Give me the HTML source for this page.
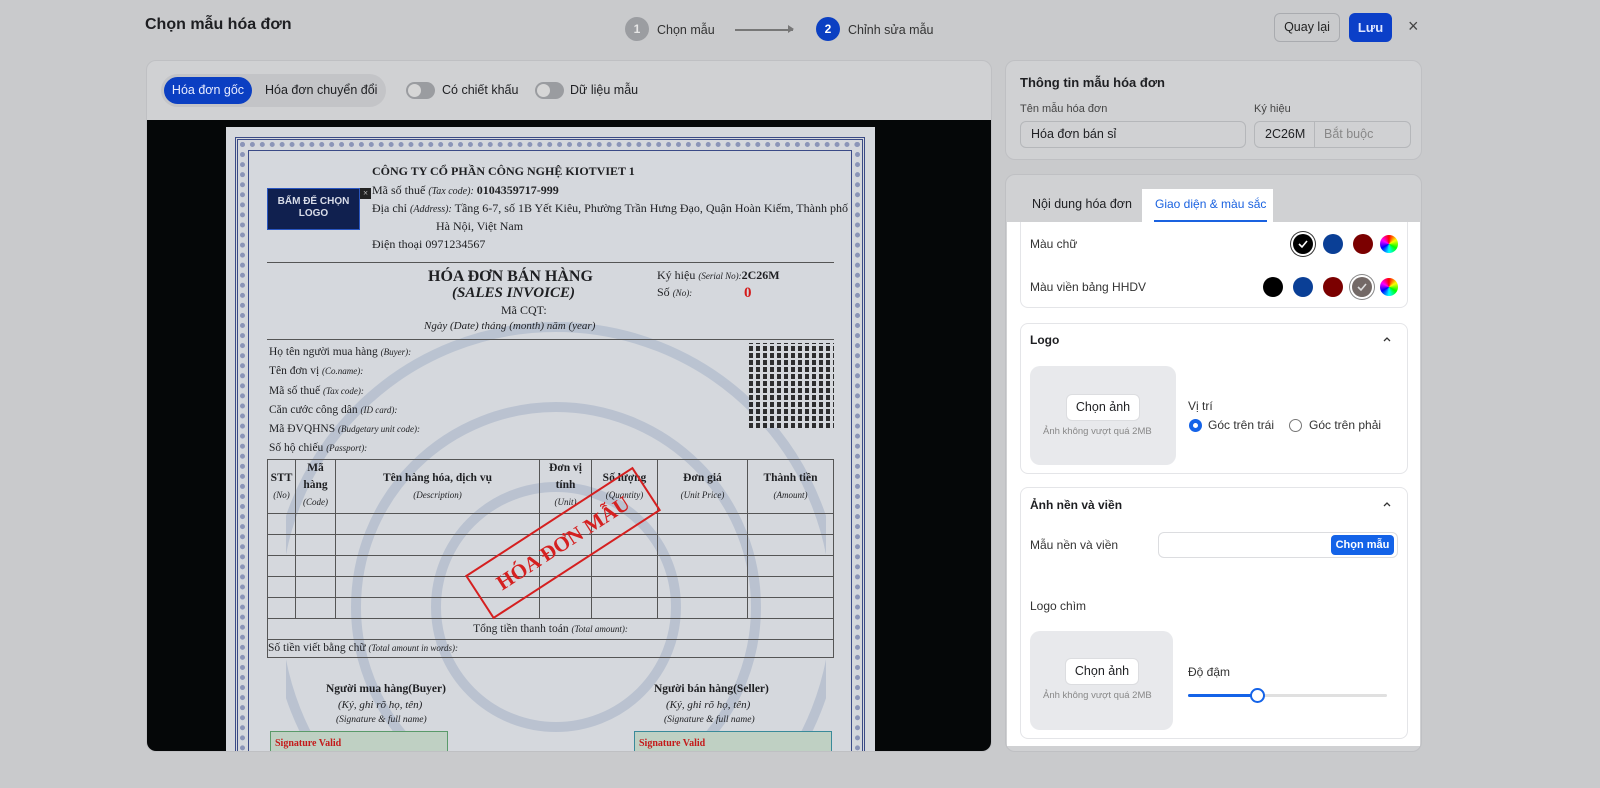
<!DOCTYPE html>
<html style="overflow:hidden;width:1600px;height:788px"><head><meta charset="utf-8"><style>
*{box-sizing:border-box;margin:0;padding:0}
html,body{max-height:788px}
body{width:1600px;height:788px;overflow:hidden;background:#c9cacc;font-family:"Liberation Sans",sans-serif;color:#1e1f22;position:relative}
.a{position:absolute}
.serif{font-family:"Liberation Serif",serif}
.card{position:absolute;background:#d0d1d3;border:1px solid #bfc0c3;border-radius:10px}
.sw{position:absolute;width:20px;height:20px;border-radius:50%}
.upl{position:absolute;background:#e8e9ec;border-radius:10px}
.btnw{position:absolute;background:#fff;border:1px solid #dcdde0;border-radius:6px;font-size:12.5px;text-align:center;line-height:25px}
.paper td{border:1px solid #555;font-size:11.5px;text-align:center;vertical-align:top;line-height:17px}
</style></head><body>
<div class="a" style="left:145px;top:16px;font-size:16px;font-weight:bold">Chọn mẫu hóa đơn</div>
<div class="a" style="left:625px;top:17px;width:24px;height:24px;border-radius:50%;background:#9b9da1;color:#e6e6e6;font-size:12px;text-align:center;line-height:24px;font-weight:bold">1</div>
<div class="a" style="left:657px;top:23px;font-size:12.5px;color:#333">Chọn mẫu</div>
<div class="a" style="left:735px;top:29px;width:58px;height:1.5px;background:#777"></div>
<div class="a" style="left:788px;top:25px;width:0;height:0;border-left:6px solid #777;border-top:4px solid transparent;border-bottom:4px solid transparent"></div>
<div class="a" style="left:816px;top:17px;width:24px;height:24px;border-radius:50%;background:#0b3fc2;color:#fff;font-size:12px;text-align:center;line-height:24px;font-weight:bold">2</div>
<div class="a" style="left:848px;top:23px;font-size:12.5px;color:#333">Chỉnh sửa mẫu</div>
<div class="a" style="left:1274px;top:13px;width:66px;height:29px;border:1px solid #a9abaf;border-radius:6px;font-size:12.5px;text-align:center;line-height:27px;color:#222">Quay lại</div>
<div class="a" style="left:1349px;top:13px;width:43px;height:29px;background:#0b3fc8;border-radius:6px;font-size:13px;text-align:center;line-height:29px;font-weight:bold;color:#dfe6ff">Lưu</div>
<div class="a" style="left:1408px;top:16px;font-size:18px;color:#444">×</div>

<div class="card" style="left:146px;top:60px;width:846px;height:692px;overflow:hidden">
 <div class="a" style="left:14px;top:13px;width:225px;height:33px;background:#c3c4c7;border-radius:17px"></div>
 <div class="a" style="left:17px;top:16px;width:88px;height:27px;background:#0b3fc2;border-radius:14px;color:#e8ecff;font-size:12.5px;text-align:center;line-height:27px">Hóa đơn gốc</div>
 <div class="a" style="left:118px;top:22px;font-size:12.5px">Hóa đơn chuyển đổi</div>
 <div class="a" style="left:259px;top:21px;width:29px;height:17px;border-radius:9px;background:#9a9ca0"><div class="a" style="left:2px;top:2px;width:13px;height:13px;border-radius:50%;background:#d6d6d6"></div></div>
 <div class="a" style="left:295px;top:22px;font-size:12.5px">Có chiết khấu</div>
 <div class="a" style="left:388px;top:21px;width:29px;height:17px;border-radius:9px;background:#9a9ca0"><div class="a" style="left:2px;top:2px;width:13px;height:13px;border-radius:50%;background:#d6d6d6"></div></div>
 <div class="a" style="left:423px;top:22px;font-size:12.5px">Dữ liệu mẫu</div>
 <div class="a" style="left:0;top:59px;width:846px;height:632px;background:#050708"></div>
</div>

<div class="a paper serif" style="left:226px;top:127px;width:649px;height:624px;background:#d5d8dd;overflow:hidden">
 <div class="a" style="left:9px;top:10px;width:630px;height:614px;border:3px double #3a4a86;border-bottom:none"></div>
 <div class="a" style="left:14px;top:15px;width:620px;height:609px;border:5px dotted #5b6aa0;border-bottom:none;opacity:.6"></div>
 <div class="a" style="left:22px;top:23px;width:604px;height:601px;border:1px solid #3a4a86;border-bottom:none"></div>
 <svg class="a" style="left:60px;top:150px" width="540" height="470"><g fill="none" stroke="#a9b5c9" stroke-width="10" opacity=".6"><circle cx="270" cy="330" r="280"/><circle cx="270" cy="330" r="200"/><circle cx="270" cy="330" r="120"/></g></svg>
 <div class="a" style="left:41px;top:61px;width:93px;height:42px;background:#10204f;border:1px solid #2a56c0;color:#d8dce8;font-family:'Liberation Sans',sans-serif;font-size:10px;font-weight:bold;text-align:center;padding-top:7px;line-height:12px">BẤM ĐỂ CHỌN<br>LOGO</div>
 <div class="a" style="left:134px;top:61px;width:11px;height:11px;background:#222;color:#ddd;font-size:9px;text-align:center;line-height:11px">×</div>
 <div class="a" style="left:146px;top:37px;font-size:12px;font-weight:bold">CÔNG TY CỔ PHẦN CÔNG NGHỆ KIOTVIET 1</div>
 <div class="a" style="left:146px;top:56px;font-size:12px">Mã số thuế <i style="font-size:10px">(Tax code):</i> <b>0104359717-999</b></div>
 <div class="a" style="left:146px;top:74px;font-size:12px;white-space:nowrap;width:480px;overflow:hidden">Địa chỉ <i style="font-size:10px">(Address):</i> Tầng 6-7, số 1B Yết Kiêu, Phường Trần Hưng Đạo, Quận Hoàn Kiếm, Thành phố</div>
 <div class="a" style="left:210px;top:92px;font-size:12px">Hà Nội, Việt Nam</div>
 <div class="a" style="left:146px;top:110px;font-size:12px">Điện thoại 0971234567</div>
 <div class="a" style="left:41px;top:135px;width:567px;height:1px;background:#555"></div>
 <div class="a" style="left:202px;top:141px;font-size:16px;font-weight:bold">HÓA ĐƠN BÁN HÀNG</div>
 <div class="a" style="left:226px;top:158px;font-size:15px;font-weight:bold;font-style:italic">(SALES INVOICE)</div>
 <div class="a" style="left:275px;top:176px;font-size:12px">Mã CQT:</div>
 <div class="a" style="left:198px;top:193px;font-size:11px;font-style:italic">Ngày (Date) tháng (month) năm (year)</div>
 <div class="a" style="left:431px;top:141px;font-size:12px">Ký hiệu <i style="font-size:9px">(Serial No):</i><b>2C26M</b></div>
 <div class="a" style="left:431px;top:158px;font-size:12px">Số <i style="font-size:9px">(No):</i></div>
 <div class="a" style="left:518px;top:158px;font-size:15px;font-weight:bold;color:#d41a1a">0</div>
 <div class="a" style="left:41px;top:212px;width:567px;height:1px;background:#555"></div>
 <div class="a" style="left:43px;top:216px;font-size:11.5px;line-height:19.3px">Họ tên người mua hàng <i style="font-size:9px">(Buyer):</i><br>Tên đơn vị <i style="font-size:9px">(Co.name):</i><br>Mã số thuế <i style="font-size:9px">(Tax code):</i><br>Căn cước công dân <i style="font-size:9px">(ID card):</i><br>Mã ĐVQHNS <i style="font-size:9px">(Budgetary unit code):</i><br>Số hộ chiếu <i style="font-size:9px">(Passport):</i></div>
 <div class="a" style="left:523px;top:216px;width:85px;height:85px;background:repeating-linear-gradient(90deg,#111 0 4px,#d5d8dd 4px 7px),#111;opacity:.85"></div>
 <div class="a" style="left:523px;top:216px;width:85px;height:85px;background:repeating-linear-gradient(0deg,transparent 0 5px,#d5d8dd 5px 7px)"></div>
 <table class="a" style="left:41px;top:332px;width:567px;border-collapse:collapse;height:199px">
  <tr style="height:54px"><td style="width:28px;padding-top:10px"><b>STT</b><br><i style="font-size:9px">(No)</i></td><td style="width:40px"><b>Mã hàng</b><br><i style="font-size:9px">(Code)</i></td><td style="width:204px;padding-top:10px"><b>Tên hàng hóa, dịch vụ</b><br><i style="font-size:9px">(Description)</i></td><td style="width:52px"><b>Đơn vị tính</b><br><i style="font-size:9px">(Unit)</i></td><td style="width:66px;padding-top:10px"><b>Số lượng</b><br><i style="font-size:9px">(Quantity)</i></td><td style="width:90px;padding-top:10px"><b>Đơn giá</b><br><i style="font-size:9px">(Unit Price)</i></td><td style="padding-top:10px"><b>Thành tiền</b><br><i style="font-size:9px">(Amount)</i></td></tr>
  <tr><td></td><td></td><td></td><td></td><td></td><td></td><td></td></tr>
  <tr><td></td><td></td><td></td><td></td><td></td><td></td><td></td></tr>
  <tr><td></td><td></td><td></td><td></td><td></td><td></td><td></td></tr>
  <tr><td></td><td></td><td></td><td></td><td></td><td></td><td></td></tr>
  <tr><td></td><td></td><td></td><td></td><td></td><td></td><td></td></tr>
  <tr style="height:21px"><td colspan="7" style="vertical-align:middle">Tổng tiền thanh toán <i style="font-size:9px">(Total amount):</i></td></tr>
  <tr style="height:18px"><td colspan="7" style="text-align:left;vertical-align:middle;font-size:11.5px">Số tiền viết bằng chữ <i style="font-size:9px">(Total amount in words):</i></td></tr>
 </table>
 <div class="a" style="width:200px;height:52px;border:2px solid #d52020;transform:rotate(-33deg);color:#d52020;font-size:21px;font-weight:bold;text-align:center;line-height:48px;left:237px;top:390px">HÓA ĐƠN MẪU</div>
 <div class="a" style="left:100px;top:556px;font-size:11.5px;font-weight:bold">Người mua hàng(Buyer)</div>
 <div class="a" style="left:112px;top:572px;font-size:11px;font-style:italic">(Ký, ghi rõ họ, tên)</div>
 <div class="a" style="left:110px;top:588px;font-size:9.5px;font-style:italic">(Signature &amp; full name)</div>
 <div class="a" style="left:428px;top:556px;font-size:11.5px;font-weight:bold">Người bán hàng(Seller)</div>
 <div class="a" style="left:440px;top:572px;font-size:11px;font-style:italic">(Ký, ghi rõ họ, tên)</div>
 <div class="a" style="left:438px;top:588px;font-size:9.5px;font-style:italic">(Signature &amp; full name)</div>
 <div class="a" style="left:44px;top:604px;width:178px;height:20px;background:#bfd0c3;border:1px solid #5a9a6a;border-bottom:none;color:#c41a1a;font-size:10px;font-weight:bold;padding:6px 4px 0">Signature Valid</div>
 <div class="a" style="left:408px;top:604px;width:198px;height:20px;background:#bfd0c3;border:1px solid #3a8a9a;border-bottom:none;color:#c41a1a;font-size:10px;font-weight:bold;padding:6px 4px 0">Signature Valid</div>
</div>

<div class="card" style="left:1005px;top:60px;width:417px;height:100px">
 <div class="a" style="left:14px;top:14px;font-size:13px;font-weight:bold">Thông tin mẫu hóa đơn</div>
 <div class="a" style="left:14px;top:42px;font-size:11px;color:#444">Tên mẫu hóa đơn</div>
 <div class="a" style="left:14px;top:60px;width:226px;height:27px;border:1px solid #b5b7ba;border-radius:6px;font-size:12.5px;padding:5px 10px">Hóa đơn bán sỉ</div>
 <div class="a" style="left:248px;top:42px;font-size:11px;color:#444">Ký hiệu</div>
 <div class="a" style="left:248px;top:60px;width:157px;height:27px;border:1px solid #b5b7ba;border-radius:6px;font-size:12.5px;padding:5px 10px">2C26M</div>
 <div class="a" style="left:308px;top:61px;width:1px;height:25px;background:#b5b7ba"></div>
 <div class="a" style="left:318px;top:66px;font-size:12.5px;color:#888">Bắt buộc</div>
</div>
<div class="card" style="left:1005px;top:174px;width:417px;height:578px"></div>
<div class="a" style="left:1032px;top:197px;font-size:12.5px">Nội dung hóa đơn</div>
<div class="a" style="left:1142px;top:189px;width:131px;height:34px;background:#fff"></div>
<div class="a" style="left:1155px;top:197px;font-size:12px;color:#1a62e0">Giao diện &amp; màu sắc</div>
<div class="a" style="left:1154px;top:220px;width:113px;height:2px;background:#1a62e0"></div>
<div class="a" style="left:1007px;top:222px;width:413px;height:524px;background:#fff;overflow:hidden">
 <div class="a" style="left:13px;top:0;width:388px;height:86px;border:1px solid #e4e5e8;border-top:none;border-radius:0 0 8px 8px"></div>
 <div class="a" style="left:23px;top:15px;font-size:12px;color:#333">Màu chữ</div>
 <div class="sw" style="left:286px;top:12px;background:#000;box-shadow:0 0 0 2px #fff,0 0 0 3px #333"></div>
 <svg class="a" style="left:290px;top:16px" width="12" height="12"><path d="M2 6l3 3 5-6" stroke="#fff" stroke-width="1.6" fill="none"/></svg>
 <div class="sw" style="left:316px;top:12px;background:#0a3f96"></div>
 <div class="sw" style="left:346px;top:12px;background:#7b0000"></div>
 <div class="sw" style="left:373px;top:13px;width:18px;height:18px;background:conic-gradient(red,yellow,lime,cyan,blue,magenta,red)"></div>
 <div class="a" style="left:23px;top:58px;font-size:12px;color:#333">Màu viền bảng HHDV</div>
 <div class="sw" style="left:256px;top:55px;background:#000"></div>
 <div class="sw" style="left:286px;top:55px;background:#0a3f96"></div>
 <div class="sw" style="left:316px;top:55px;background:#7b0000"></div>
 <div class="sw" style="left:345px;top:55px;background:#736966;box-shadow:0 0 0 2px #fff,0 0 0 3px #888"></div>
 <svg class="a" style="left:349px;top:59px" width="12" height="12"><path d="M2 6l3 3 5-6" stroke="#ddd" stroke-width="1.6" fill="none"/></svg>
 <div class="sw" style="left:373px;top:56px;width:18px;height:18px;background:conic-gradient(red,yellow,lime,cyan,blue,magenta,red)"></div>

 <div class="a" style="left:13px;top:101px;width:388px;height:151px;border:1px solid #e4e5e8;border-radius:8px"></div>
 <div class="a" style="left:23px;top:111px;font-size:12px;font-weight:bold">Logo</div>
 <svg class="a" style="left:375px;top:113px" width="10" height="8"><path d="M2 6l3-3 3 3" stroke="#333" stroke-width="1.3" fill="none"/></svg>
 <div class="upl" style="left:23px;top:144px;width:146px;height:99px"></div>
 <div class="btnw" style="left:59px;top:172px;width:74px;height:27px">Chọn ảnh</div>
 <div class="a" style="left:36px;top:204px;font-size:9.5px;color:#888">Ảnh không vượt quá 2MB</div>
 <div class="a" style="left:181px;top:177px;font-size:12px;color:#333">Vị trí</div>
 <div class="a" style="left:182px;top:197px;width:13px;height:13px;border-radius:50%;border:4px solid #1463e8"></div>
 <div class="a" style="left:201px;top:196px;font-size:12px;color:#333">Góc trên trái</div>
 <div class="a" style="left:282px;top:197px;width:13px;height:13px;border-radius:50%;border:1px solid #777"></div>
 <div class="a" style="left:302px;top:196px;font-size:12px;color:#333">Góc trên phải</div>

 <div class="a" style="left:13px;top:265px;width:388px;height:252px;border:1px solid #e4e5e8;border-radius:8px"></div>
 <div class="a" style="left:23px;top:276px;font-size:12px;font-weight:bold">Ảnh nền và viền</div>
 <svg class="a" style="left:375px;top:278px" width="10" height="8"><path d="M2 6l3-3 3 3" stroke="#333" stroke-width="1.3" fill="none"/></svg>
 <div class="a" style="left:23px;top:316px;font-size:12px;color:#333">Mẫu nền và viền</div>
 <div class="a" style="left:151px;top:310px;width:240px;height:26px;border:1px solid #dcdde0;border-radius:6px"></div>
 <div class="a" style="left:324px;top:313px;width:63px;height:20px;background:#1463e8;border-radius:4px;color:#fff;font-size:11px;font-weight:bold;text-align:center;line-height:20px">Chọn mẫu</div>
 <div class="a" style="left:23px;top:377px;font-size:12px;color:#333">Logo chìm</div>
 <div class="upl" style="left:23px;top:409px;width:143px;height:99px"></div>
 <div class="btnw" style="left:58px;top:436px;width:74px;height:27px">Chọn ảnh</div>
 <div class="a" style="left:36px;top:468px;font-size:9.5px;color:#888">Ảnh không vượt quá 2MB</div>
 <div class="a" style="left:181px;top:443px;font-size:12px;color:#333">Độ đậm</div>
 <div class="a" style="left:181px;top:472px;width:199px;height:3px;background:#e0e0e0;border-radius:2px"></div>
 <div class="a" style="left:181px;top:472px;width:70px;height:3px;background:#1463e8;border-radius:2px"></div>
 <div class="a" style="left:243px;top:466px;width:15px;height:15px;border-radius:50%;background:#fff;border:2px solid #1463e8"></div>
</div>
</body></html>
